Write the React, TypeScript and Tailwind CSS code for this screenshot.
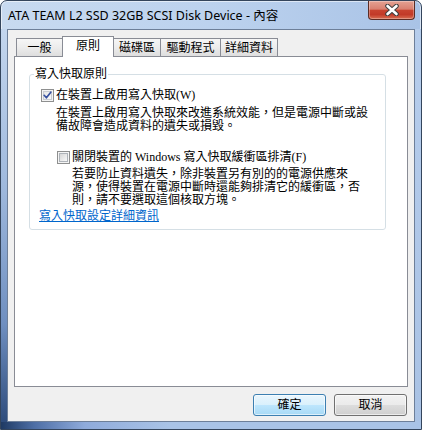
import React from "react";

function CheckBox({ checked }: { checked: boolean }) {
  return (
    <svg width="13" height="13" viewBox="0 0 13 13" className="shrink-0 block">
      <defs>
        <linearGradient id={checked ? "cbg1" : "cbg2"} x1="0" y1="0" x2="1" y2="1">
          <stop offset="0" stopColor={checked ? "#e4e4e4" : "#d4d4d4"} />
          <stop offset="1" stopColor="#fbfbfb" />
        </linearGradient>
      </defs>
      <rect x="0.5" y="0.5" width="12" height="12" fill="#f4f4f4" stroke="#8e8f8f" />
      <rect x="2.5" y="2.5" width="8" height="8" fill={`url(#${checked ? "cbg1" : "cbg2"})`} stroke={checked ? "#c8ccd2" : "#aeb3b9"} />
      {checked && (
        <path d="M3.2 6.3 L5.4 8.8 L9.8 3.2" fill="none" stroke="#3650a0" strokeWidth="1.7" strokeLinecap="round" strokeLinejoin="round" />
      )}
    </svg>
  );
}

export default function App() {
  return (
    <div className="w-[422px] h-[430px] flex flex-col border border-[#34455c] rounded-t-[7px] overflow-hidden bg-[linear-gradient(90deg,#c8daf0_0%,#bcd2ee_50%,#a9c3e6_100%)] font-['Liberation_Serif','Noto_Sans_CJK_TC',serif] text-[12px] text-black shadow-[inset_0_0_0_1px_rgba(255,255,255,0.55)]">
      <div className="h-[28px] flex shrink-0">
        <div className="pl-[7px] pt-[6px] text-[12.5px] leading-[17px] font-['Noto_Sans','Noto_Sans_CJK_TC',sans-serif] text-black whitespace-nowrap">
          ATA TEAM L2 SSD 32GB SCSI Disk Device - 內容
        </div>
        <div className="ml-auto mr-[6px] w-[47px] h-[19px] border border-t-0 border-[#5b2c24] rounded-b-[4px] bg-[linear-gradient(180deg,#e4a293_0%,#d98070_45%,#c8432f_52%,#c23a28_75%,#d86e52_100%)] shadow-[inset_0_0_0_1px_rgba(255,255,255,0.3)] flex items-center justify-center">
          <svg width="16" height="12" viewBox="0 0 16 12">
            <path d="M3.5 2 L12.5 10 M12.5 2 L3.5 10" stroke="#3f3f3f" strokeWidth="4.6" strokeLinecap="round" />
            <path d="M3.5 2 L12.5 10 M12.5 2 L3.5 10" stroke="#ffffff" strokeWidth="2.6" strokeLinecap="round" />
          </svg>
        </div>
      </div>
      <div className="flex flex-1 min-h-0">
        <div className="w-[6px] bg-[linear-gradient(180deg,#c3d6ee_0%,#9fb9dd_40%,#6f8fc0_75%,#2e4c7c_100%)]" />
        <div className="flex-1 border border-[#6d7f99] bg-[#f0f0f0] flex flex-col pt-[6px] pl-[6px] pr-[6px]">
          <div className="flex items-end h-[21px] pl-[2px] relative z-10 leading-[14px]">
            <div className="h-[19px] w-[47px] border border-[#898c95] bg-[linear-gradient(180deg,#f6f6f6_0%,#ececec_50%,#dedede_100%)] flex items-center justify-center">一般</div>
            <div className="-ml-px h-[21px] w-[52px] border border-b-0 border-[#898c95] bg-white flex items-center justify-center pb-[3px]">原則</div>
            <div className="-ml-px h-[19px] w-[48px] border border-[#898c95] bg-[linear-gradient(180deg,#f6f6f6_0%,#ececec_50%,#dedede_100%)] flex items-center justify-center">磁碟區</div>
            <div className="-ml-px h-[19px] w-[61px] border border-[#898c95] bg-[linear-gradient(180deg,#f6f6f6_0%,#ececec_50%,#dedede_100%)] flex items-center justify-center">驅動程式</div>
            <div className="-ml-px h-[19px] w-[58px] border border-[#898c95] bg-[linear-gradient(180deg,#f6f6f6_0%,#ececec_50%,#dedede_100%)] flex items-center justify-center">詳細資料</div>
          </div>
          <div className="-mt-px h-[331px] border border-[#898c95] bg-white flex flex-col">
            <fieldset className="mt-[10px] ml-[14px] mr-[21px] border border-[#d5dfe5] rounded-[3px] pb-[6px]">
              <legend className="ml-[4px] px-[1px] leading-[14px]">寫入快取原則</legend>
              <div className="mt-[7px] ml-[11px] flex items-center gap-[2px] h-[14px] leading-[14px]">
                <CheckBox checked />
                <span>在裝置上啟用寫入快取(W)</span>
              </div>
              <div className="mt-[5px] ml-[26px] leading-[13px] whitespace-nowrap">
                在裝置上啟用寫入快取來改進系統效能，但是電源中斷或設
                <br />
                備故障會造成資料的遺失或損毀。
              </div>
              <div className="mt-[17px] ml-[27px] flex items-center gap-[2px] h-[14px] leading-[14px]">
                <CheckBox checked={false} />
                <span>關閉裝置的 Windows 寫入快取緩衝區排清(F)</span>
              </div>
              <div className="mt-[4px] ml-[42px] leading-[13px] whitespace-nowrap">
                若要防止資料遺失，除非裝置另有別的的電源供應來
                <br />
                源，使得裝置在電源中斷時還能夠排清它的緩衝區，否
                <br />
                則，請不要選取這個核取方塊。
              </div>
              <div className="mt-[3px] ml-[9px] leading-[13px]">
                <span className="text-[#0066cc] underline">寫入快取設定詳細資訊</span>
              </div>
            </fieldset>
          </div>
          <div className="flex justify-end gap-[8px] mt-[7px] pr-[1px]">
            <div className="w-[73px] h-[22px] rounded-[3px] border border-[#3c7fb1] bg-[linear-gradient(180deg,#eaf6fd_0%,#d9f0fc_50%,#bee6fd_50%,#a7d9f5_100%)] shadow-[inset_0_0_0_1px_rgba(255,255,255,0.6)] flex items-center justify-center leading-[14px]">確定</div>
            <div className="w-[73px] h-[22px] rounded-[3px] border border-[#707070] bg-[linear-gradient(180deg,#f2f2f2_0%,#ebebeb_50%,#dddddd_50%,#cfcfcf_100%)] shadow-[inset_0_0_0_1px_rgba(255,255,255,0.6)] flex items-center justify-center leading-[14px]">取消</div>
          </div>
        </div>
        <div className="w-[6px] bg-[linear-gradient(180deg,#b6cdec_0%,#a9c2e4_100%)]" />
      </div>
      <div className="h-[7px] shrink-0 bg-[linear-gradient(90deg,#1f3a63_0%,#4e6fa6_8%,#8fabdb_20%,#a9c3e6_40%,#a9c3e6_100%)]" />
    </div>
  );
}
